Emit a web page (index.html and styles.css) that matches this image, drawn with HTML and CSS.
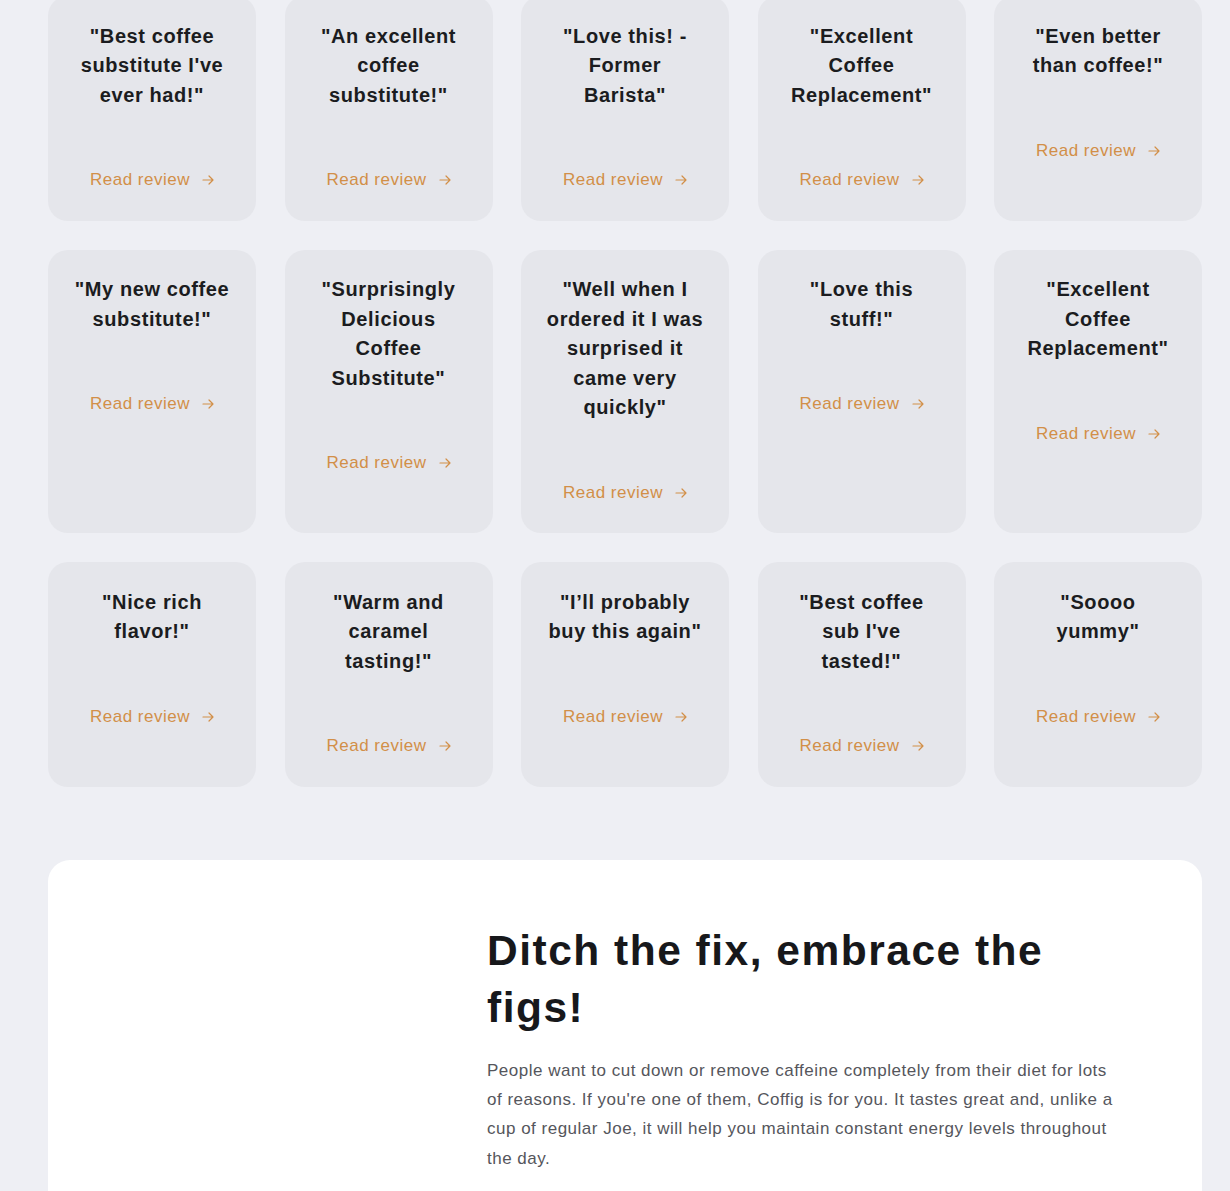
FILE: index.html
```html
<!DOCTYPE html>
<html lang="en">
<head>
<meta charset="utf-8">
<title>Reviews</title>
<link rel="stylesheet" href="styles.css">
</head>
<body>
<main class="page">
  <section class="reviews">
    <div class="card"><h3 class="quote">"Best coffee substitute I've ever had!"</h3><a class="link" href="#">Read review <svg class="arrow" viewBox="0 0 12 12"><path d="M1 6h10M7 2l4 4-4 4"/></svg></a></div>
    <div class="card"><h3 class="quote">"An excellent coffee substitute!"</h3><a class="link" href="#">Read review <svg class="arrow" viewBox="0 0 12 12"><path d="M1 6h10M7 2l4 4-4 4"/></svg></a></div>
    <div class="card"><h3 class="quote">"Love this! - Former Barista"</h3><a class="link" href="#">Read review <svg class="arrow" viewBox="0 0 12 12"><path d="M1 6h10M7 2l4 4-4 4"/></svg></a></div>
    <div class="card"><h3 class="quote">"Excellent Coffee Replacement"</h3><a class="link" href="#">Read review <svg class="arrow" viewBox="0 0 12 12"><path d="M1 6h10M7 2l4 4-4 4"/></svg></a></div>
    <div class="card"><h3 class="quote">"Even better than coffee!"</h3><a class="link" href="#">Read review <svg class="arrow" viewBox="0 0 12 12"><path d="M1 6h10M7 2l4 4-4 4"/></svg></a></div>

    <div class="card"><h3 class="quote">"My new coffee substitute!"</h3><a class="link" href="#">Read review <svg class="arrow" viewBox="0 0 12 12"><path d="M1 6h10M7 2l4 4-4 4"/></svg></a></div>
    <div class="card"><h3 class="quote">"Surprisingly Delicious Coffee Substitute"</h3><a class="link" href="#">Read review <svg class="arrow" viewBox="0 0 12 12"><path d="M1 6h10M7 2l4 4-4 4"/></svg></a></div>
    <div class="card"><h3 class="quote">"Well when I ordered it I was surprised it came very quickly"</h3><a class="link" href="#">Read review <svg class="arrow" viewBox="0 0 12 12"><path d="M1 6h10M7 2l4 4-4 4"/></svg></a></div>
    <div class="card"><h3 class="quote">"Love this stuff!"</h3><a class="link" href="#">Read review <svg class="arrow" viewBox="0 0 12 12"><path d="M1 6h10M7 2l4 4-4 4"/></svg></a></div>
    <div class="card"><h3 class="quote">"Excellent Coffee Replacement"</h3><a class="link" href="#">Read review <svg class="arrow" viewBox="0 0 12 12"><path d="M1 6h10M7 2l4 4-4 4"/></svg></a></div>

    <div class="card"><h3 class="quote">"Nice rich flavor!"</h3><a class="link" href="#">Read review <svg class="arrow" viewBox="0 0 12 12"><path d="M1 6h10M7 2l4 4-4 4"/></svg></a></div>
    <div class="card"><h3 class="quote">"Warm and caramel tasting!"</h3><a class="link" href="#">Read review <svg class="arrow" viewBox="0 0 12 12"><path d="M1 6h10M7 2l4 4-4 4"/></svg></a></div>
    <div class="card"><h3 class="quote">"I’ll probably buy this again"</h3><a class="link" href="#">Read review <svg class="arrow" viewBox="0 0 12 12"><path d="M1 6h10M7 2l4 4-4 4"/></svg></a></div>
    <div class="card"><h3 class="quote">"Best coffee sub I've tasted!"</h3><a class="link" href="#">Read review <svg class="arrow" viewBox="0 0 12 12"><path d="M1 6h10M7 2l4 4-4 4"/></svg></a></div>
    <div class="card"><h3 class="quote">"Soooo yummy"</h3><a class="link" href="#">Read review <svg class="arrow" viewBox="0 0 12 12"><path d="M1 6h10M7 2l4 4-4 4"/></svg></a></div>
  </section>

  <section class="feature">
    <div class="feature-media"></div>
    <div class="feature-body">
      <h2 class="feature-title">Ditch the fix, embrace the figs!</h2>
      <p class="feature-text">People want to cut down or remove caffeine completely from their diet for lots of reasons. If you're one of them, Coffig is for you. It tastes great and, unlike a cup of regular Joe, it will help you maintain constant energy levels throughout the day.</p>
    </div>
  </section>
</main>
</body>
</html>
```

FILE: styles.css
```css
* { box-sizing: border-box; }

html, body {
  margin: 0;
  background: #eeeff4;
}

body {
  font-family: "Liberation Sans", Arial, sans-serif;
  color: #1b1c20;
}

.page {
  margin-top: -4px;
  padding: 0 28px 0 48px;
}

.reviews {
  display: grid;
  grid-template-columns: repeat(5, 1fr);
  column-gap: 28.5px;
  row-gap: 29px;
}

.card {
  background: #e5e6eb;
  border-radius: 20px;
  padding: 25.5px 25px 28.5px;
  display: flex;
  flex-direction: column;
  align-items: center;
  text-align: center;
}

.quote {
  margin: 0;
  font-size: 20px;
  font-weight: 700;
  line-height: 29.5px;
  letter-spacing: 0.6px;
  color: #1b1c20;
}

.link {
  margin-top: 58px;
  display: inline-flex;
  align-items: center;
  gap: 12px;
  font-size: 17px;
  line-height: 24px;
  color: #d28f48;
  text-decoration: none;
  letter-spacing: 0.5px;
}

.arrow {
  width: 12px;
  height: 12px;
  fill: none;
  stroke: #d28f48;
  stroke-width: 1.2;
  stroke-linecap: round;
  stroke-linejoin: round;
}

.feature {
  margin-top: 73px;
  background: #ffffff;
  border-radius: 22px;
  display: grid;
  grid-template-columns: 375px 1fr;
  column-gap: 64px;
  padding: 62px 72px 40px 0;
  min-height: 360px;
}

.feature-title {
  margin: 0;
  font-size: 42.5px;
  line-height: 57px;
  font-weight: 700;
  letter-spacing: 1.5px;
  color: #17181b;
}

.feature-text {
  margin: 20px 0 0;
  max-width: 630px;
  font-size: 17px;
  line-height: 29.4px;
  letter-spacing: 0.5px;
  color: #55565c;
}
```
